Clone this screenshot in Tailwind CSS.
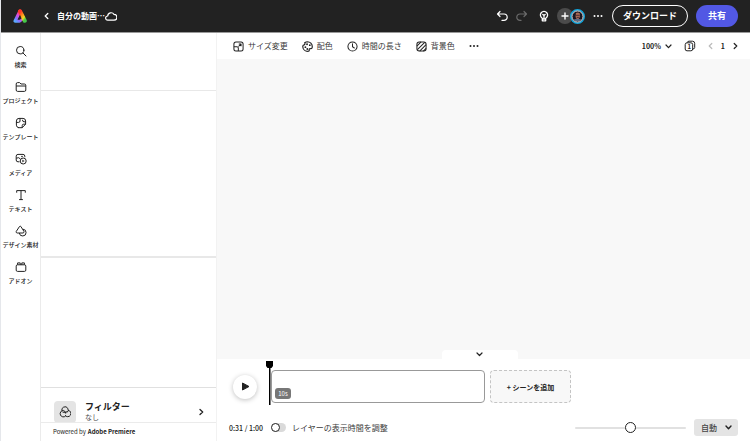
<!DOCTYPE html>
<html lang="ja">
<head>
    <meta charset="UTF-8">
    <meta name="viewport" content="width=device-width, initial-scale=1.0">
    <title>自分の動画</title>
    <script src="https://cdn.jsdelivr.net/npm/@tailwindcss/browser@4"></script>
</head>
<body class="h-screen flex flex-col overflow-hidden bg-white border-l border-gray-200 text-[#222] text-[8px] leading-3 font-['Noto_Sans_CJK_JP',sans-serif]">
    <!-- ヘッダー -->
    <header class="h-8 shrink-0 box-content flex items-center justify-between bg-[#222] text-white border-b border-[#999] px-3">
        <div class="flex items-center">
            <a href="#" aria-label="ホーム">
                <svg class="w-[14px] h-[14px]" viewBox="0 0 28 28">
                    <defs>
                        <linearGradient id="left" x1="0" y1="1" x2="0.7" y2="0">
                            <stop offset="0" stop-color="#5aa8ff"/>
                            <stop offset="0.3" stop-color="#8c6cff"/>
                            <stop offset="0.6" stop-color="#e04ad8"/>
                            <stop offset="1" stop-color="#ff3b30"/>
                        </linearGradient>
                        <linearGradient id="right" x1="0.2" y1="0" x2="0.8" y2="1">
                            <stop offset="0" stop-color="#ff3426"/>
                            <stop offset="0.45" stop-color="#ff9a1c"/>
                            <stop offset="0.75" stop-color="#e8dc24"/>
                            <stop offset="1" stop-color="#45c94a"/>
                        </linearGradient>
                    </defs>
                    <path d="M14 4.500 4.500 24H13L17.500 20" fill="none" stroke="url(#left)" stroke-width="7" stroke-linecap="round" stroke-linejoin="round"/>
                    <path d="M14 4.500 23.500 23.500" fill="none" stroke="url(#right)" stroke-width="8" stroke-linecap="round"/>
                    <path d="M14 11.500 9 21.500H13.500L17 19Z" fill="#222"/>
                </svg>
            </a>
            <button class="ml-[15px] w-2 flex justify-center" aria-label="戻る">
                <svg class="w-[5px] h-2" viewBox="0 0 5 8" fill="none" stroke="currentColor" stroke-width="1.300" stroke-linecap="round" stroke-linejoin="round"><path d="M3.800 1.500 1.200 4 3.800 6.500"/></svg>
            </button>
            <h1 class="ml-[7px] font-bold">自分の動画…</h1>
            <svg class="w-3 h-3" viewBox="0 0 12 12" fill="none" stroke="currentColor" stroke-width="1.200" stroke-linejoin="round"><path d="M2.700 10.200A2.100 2.100 0 0 1 2.700 6 3.400 3.400 0 0 1 9 4.400 2.900 2.900 0 0 1 9 10.200Z"/></svg>
        </div>
        <div class="flex items-center">
            <button aria-label="元に戻す">
                <svg class="w-3 h-3" viewBox="0 0 12 12" fill="none" stroke="currentColor" stroke-width="1.200" stroke-linecap="round" stroke-linejoin="round"><path d="M4 1.500 1.500 4 4 6.500M1.500 4H8A3.200 3.200 0 0 1 8 10.400H6"/></svg>
            </button>
            <button class="ml-2 text-[#6b6b6b]" aria-label="やり直す">
                <svg class="w-3 h-3" viewBox="0 0 12 12" fill="none" stroke="currentColor" stroke-width="1.200" stroke-linecap="round" stroke-linejoin="round"><path d="M8 1.500 10.500 4 8 6.500M10.500 4H4A3.200 3.200 0 0 0 4 10.400H5"/></svg>
            </button>
            <button class="ml-[11px]" aria-label="ヒント">
                <svg class="w-[10px] h-3" viewBox="0 0 10 12" fill="none" stroke="currentColor" stroke-width="1.300" stroke-linecap="round" stroke-linejoin="round"><path d="M3.300 8.200A3.600 3.600 0 1 1 6.700 8.200V10.800H3.300ZM5 8V5M3.800 4.500 5 5.500 6.200 4.500M3.500 9H6.500"/></svg>
            </button>
            <div class="ml-2 flex items-center">
                <button class="w-4 h-4 flex items-center justify-center rounded-full bg-[#4b4b4b]" aria-label="メンバーを追加">
                    <svg class="w-2 h-2" viewBox="0 0 8 8" stroke="currentColor" stroke-width="1.400" stroke-linecap="round"><path d="M4 1V7M1 4H7"/></svg>
                </button>
                <svg class="w-[15px] h-[15px] -ml-[3px]" viewBox="0 0 14 14">
                    <circle cx="7" cy="7" r="6.300" fill="#1c1720" stroke="#12a5dc" stroke-width="1.400"/>
                    <circle cx="7" cy="7" r="5.200" fill="none" stroke="#fff" stroke-width="0.800"/>
                    <path d="M5.500 3.800Q7.500 2.500 9.200 4.200V7.500L8 9.300H6.200L5.200 7.500Z" fill="#a96a55"/>
                    <path d="M5.400 5.900H9M6.300 7.900H8.300" stroke="#33202a" stroke-width="0.700"/>
                    <path d="M3.500 9.800Q7 8.500 10.500 9.800L9.300 11.200H4.700Z" fill="#596a86"/>
                </svg>
            </div>
            <button class="ml-2" aria-label="その他">
                <svg class="w-[10px] h-1" viewBox="0 0 10 4" fill="currentColor"><circle cx="1.500" cy="2" r="1"/><circle cx="5" cy="2" r="1"/><circle cx="8.500" cy="2" r="1"/></svg>
            </button>
            <button class="ml-[9px] h-[22px] px-[10px] rounded-full border border-white text-[9px] font-bold">ダウンロード</button>
            <button class="ml-2 h-[22px] px-3 rounded-full bg-[#5258e4] text-[9px] font-bold">共有</button>
        </div>
    </header>

    <div class="flex-1 min-h-0 flex">
        <!-- サイドバー -->
        <nav class="w-10 shrink-0 pt-3 flex flex-col border-r border-[#ebebeb] text-[6px] leading-2 font-medium text-center whitespace-nowrap">
            <a href="#" class="h-9 flex flex-col items-center gap-1">
                <svg class="w-3 h-3" viewBox="0 0 12 12" fill="none" stroke="currentColor" stroke-width="1" stroke-linecap="round"><circle cx="5.200" cy="5.200" r="3.700"/><path d="M8 8 11 11"/></svg>
                検索
            </a>
            <a href="#" class="h-9 flex flex-col items-center gap-1">
                <svg class="w-3 h-3" viewBox="0 0 12 12" fill="none" stroke="currentColor" stroke-width="1" stroke-linejoin="round"><path d="M1.200 9V3A1.400 1.400 0 0 1 2.600 1.600H4.600L6 3H9.400A1.400 1.400 0 0 1 10.800 4.400V9A1.400 1.400 0 0 1 9.400 10.400H2.600A1.400 1.400 0 0 1 1.200 9ZM1.200 5H10.800"/></svg>
                プロジェクト
            </a>
            <a href="#" class="h-9 flex flex-col items-center gap-1">
                <svg class="w-3 h-3" viewBox="0 0 12 12" fill="none" stroke="currentColor" stroke-width="1" stroke-linecap="round" stroke-linejoin="round"><path d="M3.500 10.600A2.400 2.400 0 0 1 1.400 8.200V4A2.600 2.600 0 0 1 4 1.400H8A2.600 2.600 0 0 1 10.600 4V7.200L7.200 10.700H3.500M1.500 5.400H3.600Q5 5.400 5 4V1.500M10.500 4.800H9Q7.500 4.800 7.500 3.200M7.200 10.500V8.600Q7.200 7.200 8.600 7.200H10.300"/></svg>
                テンプレート
            </a>
            <a href="#" class="h-9 flex flex-col items-center gap-1">
                <svg class="w-3 h-3" viewBox="0 0 12 12" fill="none" stroke="currentColor" stroke-width="1" stroke-linejoin="round"><path d="M4.500 8.800H3A1.800 1.800 0 0 1 1.200 7V3.200A1.800 1.800 0 0 1 3 1.400H8A1.800 1.800 0 0 1 9.800 3.200V4.200M1.300 5.200Q4 3.800 5.400 6"/><circle cx="7" cy="3.500" r="0.400"/><circle cx="8.200" cy="8" r="3"/><path d="M7.500 6.900V9.100L9.300 8Z" fill="currentColor" stroke-width="0.300"/></svg>
                メディア
            </a>
            <a href="#" class="h-9 flex flex-col items-center gap-1">
                <svg class="w-3 h-3" viewBox="0 0 12 12" fill="none" stroke="currentColor" stroke-width="1" stroke-linecap="round" stroke-linejoin="round"><path d="M1.700 3.300V1.600H10.300V3.300M6 1.600V10.600M4.500 10.600H7.500"/></svg>
                テキスト
            </a>
            <a href="#" class="h-9 flex flex-col items-center gap-1">
                <svg class="w-3 h-3" viewBox="0 0 12 12" fill="none" stroke="currentColor" stroke-width="1" stroke-linejoin="round"><path d="M4.500 1.500Q5.200 .8 5.900 1.500L9 6.500Q9.300 7.800 8 8H2.200Q.8 7.800 1.200 6.500Z"/><path d="M8 4.200A3.400 3.400 0 1 1 4.300 8"/></svg>
                デザイン素材
            </a>
            <a href="#" class="h-9 flex flex-col items-center gap-1">
                <svg class="w-3 h-3" viewBox="0 0 12 12" fill="none" stroke="currentColor" stroke-width="1" stroke-linejoin="round"><rect x="1.200" y="3.800" width="9.600" height="6.600" rx="1.300"/><path d="M2.600 3.800V1.900H5.200V3.800M6.800 3.800V1.900H9.400V3.800"/></svg>
                アドオン
            </a>
        </nav>

        <!-- パネル -->
        <aside class="w-44 shrink-0 flex flex-col border-r border-[#f2f2f2]">
            <div class="flex-[57] border-b border-[#e8e8e8]"></div>
            <div class="flex-[167] border-b-2 border-[#e8e8e8]"></div>
            <div class="flex-[130] border-b border-[#e0e0e0]"></div>
            <button class="h-[34px] overflow-hidden flex items-start pt-[13px] pl-[13px] pr-3 text-left">
                <span class="w-[22px] h-[22px] shrink-0 flex items-center justify-center rounded-sm bg-[#e4e4e4]">
                    <svg class="w-3 h-3" viewBox="0 0 12 12" fill="none" stroke="currentColor" stroke-width="1"><path d="M3 5A3.200 3.200 0 1 1 8 6.500M9 4.300A3.200 3.200 0 1 1 6 9.200M6.600 10A3.200 3.200 0 1 1 4.200 4.500Q6.700 5 6.700 7.600M3.500 6Q5.600 7.200 8.300 5.600"/></svg>
                </span>
                <span class="ml-[9px] flex-1 flex flex-col">
                    <span class="text-[9px] leading-3 font-bold">フィルター</span>
                    <span class="text-[7px] leading-2 text-[#505050]">なし</span>
                </span>
                <svg class="w-[5px] h-2 mt-[7px]" viewBox="0 0 5 8" fill="none" stroke="currentColor" stroke-width="1.300" stroke-linecap="round" stroke-linejoin="round"><path d="M1 1.500 3.700 4 1 6.500"/></svg>
            </button>
            <p class="h-[19px] shrink-0 pl-3 flex items-center gap-[2px] border-t border-[#ebebeb] text-[6px]">Powered by <b>Adobe Premiere</b></p>
        </aside>

        <main class="flex-1 min-w-0 flex flex-col">
            <!-- ツールバー -->
            <div class="h-[26px] shrink-0 flex items-center justify-between pl-4 pr-3">
                <div class="flex items-center gap-[14px] text-[#3a3a3a]">
                    <button class="flex items-center gap-1">
                        <svg class="w-[11px] h-[11px]" viewBox="0 0 12 12" fill="none" stroke="#222" stroke-width="1.100" stroke-linejoin="round"><rect x="1" y="1" width="10" height="10" rx="2.200"/><path d="M1 6.200H4.300Q5.800 6.200 5.800 7.700V11M6 6 8.600 3.400M6.300 3.200H8.800V5.700"/></svg>
                        サイズ変更
                    </button>
                    <button class="flex items-center gap-1">
                        <svg class="w-[11px] h-[11px]" viewBox="0 0 12 12" fill="none" stroke="#222" stroke-width="1.300"><path d="M6 .8A5.200 5.200 0 0 0 3 1.800Q3.800 3.600 2.200 4.200Q.6 4.600 .9 6.500A5.200 5.200 0 0 0 6.500 11.200Q8.200 11 7.800 9.500Q8 7.900 9.500 8.400Q11.200 8.600 11.200 6A5.200 5.200 0 0 0 6 .8Z"/><g fill="#222" stroke="none"><circle cx="5.500" cy="3.500" r="1"/><circle cx="8.500" cy="4.500" r="1"/><circle cx="3.700" cy="6.700" r="1"/><circle cx="5.800" cy="8.700" r="1"/></g></svg>
                        配色
                    </button>
                    <button class="flex items-center gap-1">
                        <svg class="w-[11px] h-[11px]" viewBox="0 0 12 12" fill="none" stroke="#222" stroke-width="1.100" stroke-linecap="round"><circle cx="6" cy="6" r="5"/><path d="M6 3V6.200L8 7.600"/></svg>
                        時間の長さ
                    </button>
                    <button class="flex items-center gap-1">
                        <svg class="w-[11px] h-[11px]" viewBox="0 0 12 12" fill="none" stroke="#222" stroke-width="1.100"><rect x="1" y="1" width="10" height="10" rx="2.500"/><path d="M1 5.500 5.500 1M1.500 9.500 9.500 1.500M4 11 11 4M8 11 11 8"/></svg>
                        背景色
                    </button>
                    <button class="text-[#222]" aria-label="その他">
                        <svg class="w-[10px] h-1" viewBox="0 0 10 4" fill="currentColor"><circle cx="1.500" cy="2" r="1"/><circle cx="5" cy="2" r="1"/><circle cx="8.500" cy="2" r="1"/></svg>
                    </button>
                </div>
                <div class="flex items-center">
                    <div class="relative flex items-center">
                        <select aria-label="ズーム" class="appearance-none w-[30px] text-[7px] font-bold">
                            <option>100%</option>
                        </select>
                        <svg class="absolute right-0 w-[7px] h-[5px] pointer-events-none" viewBox="0 0 7 5" fill="none" stroke="currentColor" stroke-width="1.200" stroke-linecap="round" stroke-linejoin="round"><path d="M1 1 3.500 3.700 6 1"/></svg>
                    </div>
                    <button class="ml-3" aria-label="ページ">
                        <svg class="w-3 h-3" viewBox="0 0 12 12" fill="none" stroke="currentColor" stroke-width="1"><rect x="1.200" y="2.800" width="7.500" height="8" rx="1.800"/><path d="M3.200 2.500Q3.500 1.200 5 1.200H8.500Q10.700 1.200 10.700 3.400V7.500Q10.700 8.800 9 9"/><text x="3.500" y="9" font-size="6" font-weight="700" fill="currentColor" stroke="none">1</text></svg>
                    </button>
                    <button class="ml-3 text-[#bbb]" aria-label="前のページ">
                        <svg class="w-[5px] h-2" viewBox="0 0 5 8" fill="none" stroke="currentColor" stroke-width="1.200" stroke-linecap="round" stroke-linejoin="round"><path d="M3.800 1.500 1.200 4 3.800 6.500"/></svg>
                    </button>
                    <span class="mx-2 text-[7px] font-bold">1</span>
                    <button aria-label="次のページ">
                        <svg class="w-[5px] h-2" viewBox="0 0 5 8" fill="none" stroke="currentColor" stroke-width="1.200" stroke-linecap="round" stroke-linejoin="round"><path d="M1.200 1.500 3.800 4 1.200 6.500"/></svg>
                    </button>
                </div>
            </div>

            <!-- キャンバス -->
            <div class="flex-1 flex items-end justify-center pr-2 bg-[#f8f8f8]">
                <button class="w-[76px] h-[9px] flex items-center justify-center rounded-t bg-white" aria-label="タイムラインを閉じる">
                    <svg class="w-[7px] h-[5px]" viewBox="0 0 7 5" fill="none" stroke="currentColor" stroke-width="1.200" stroke-linecap="round" stroke-linejoin="round"><path d="M1 1 3.500 3.500 6 1"/></svg>
                </button>
            </div>

            <!-- タイムライン -->
            <section class="shrink-0 px-3 pb-[5px]">
                <div class="flex items-center pt-[11px] pl-1">
                    <button class="w-6 h-6 flex items-center justify-center rounded-full bg-white shadow-[0_1px_5px_rgba(0,0,0,0.25)]" aria-label="再生">
                        <svg class="w-[9px] h-[9px]" viewBox="0 0 9 9" fill="currentColor" stroke="currentColor" stroke-linejoin="round"><path d="M1.500 1V8L8 4.500Z"/></svg>
                    </button>
                    <div class="relative ml-[14px] flex gap-[5px]">
                        <div class="w-[214px] h-[33px] p-[3px] flex items-end rounded border border-[#999]">
                            <span class="w-4 h-[11px] flex items-center justify-center rounded-[3px] bg-[#777] text-white text-[6px]">10s</span>
                        </div>
                        <button class="w-[81px] h-[33px] rounded border border-dashed border-[#c4c4c4] bg-[#f8f8f8] text-[7px] font-bold whitespace-nowrap">+ シーンを追加</button>
                        <svg class="absolute -left-[5px] -top-[9px] w-[7px] h-11" viewBox="0 0 7 44" fill="#000"><path d="M0 0H7V5L5.500 7H1.500L0 5ZM3 6H4.500V44H3Z"/></svg>
                    </div>
                </div>
                <div class="mt-4 flex items-center justify-between">
                    <div class="flex items-center">
                        <span class="w-[42px] text-[7px] font-medium whitespace-nowrap">0:31 / 1:00</span>
                        <label class="flex items-center gap-[6px] text-[#3a3a3a]">
                            <input type="checkbox" role="switch" class="appearance-none w-[15px] h-[9px] rounded-full bg-[#dadada] before:block before:w-[9px] before:h-[9px] before:rounded-full before:border before:border-[#222] before:bg-white checked:before:ml-[6px]">
                            レイヤーの表示時間を調整
                        </label>
                    </div>
                    <div class="flex items-center gap-2">
                        <input type="range" aria-label="タイムラインのズーム" min="0" max="100" value="50" class="appearance-none w-[111px] h-[2px] rounded-full bg-[#e1e1e1] [&::-webkit-slider-thumb]:appearance-none [&::-webkit-slider-thumb]:w-[11px] [&::-webkit-slider-thumb]:h-[11px] [&::-webkit-slider-thumb]:rounded-full [&::-webkit-slider-thumb]:border [&::-webkit-slider-thumb]:border-[#222] [&::-webkit-slider-thumb]:bg-white">
                        <div class="relative flex items-center">
                            <select aria-label="表示" class="appearance-none w-11 h-[17px] pl-[7px] rounded-[3px] bg-[#e4e4e4] text-[#444] text-[8px] font-medium">
                                <option>自動</option>
                            </select>
                            <svg class="absolute right-[6px] w-[7px] h-[5px] pointer-events-none" viewBox="0 0 7 5" fill="none" stroke="currentColor" stroke-width="1.400" stroke-linecap="round" stroke-linejoin="round"><path d="M1 1 3.500 3.700 6 1"/></svg>
                        </div>
                    </div>
                </div>
            </section>
        </main>
    </div>
</body>
</html>
